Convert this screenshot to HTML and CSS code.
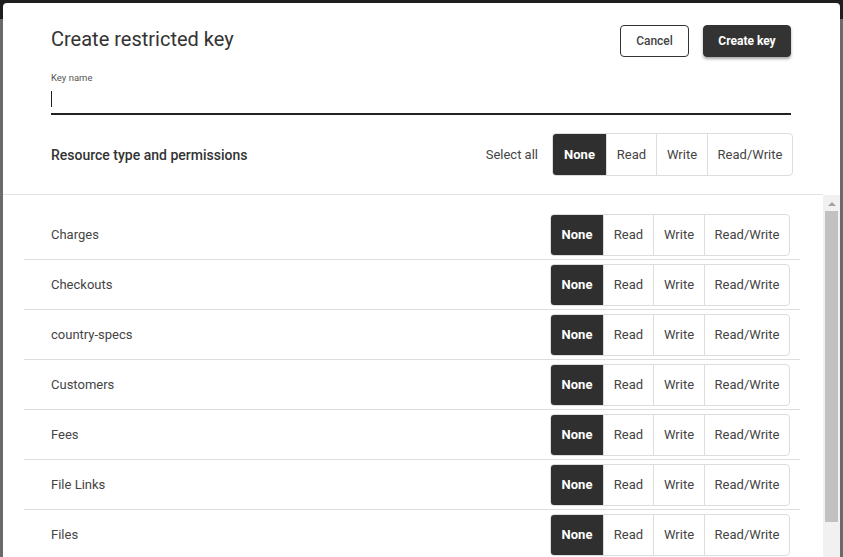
FILE: index.html
```html
<!DOCTYPE html>
<html>
<head>
<meta charset="utf-8">
<link rel="stylesheet" href="styles.css">
</head>
<body>
<div class="backdrop">
  <div class="backdrop-bar"></div>
</div>
<div class="modal">
  <div class="head">
    <h1 class="title">Create restricted key</h1>
    <div class="actions">
      <button class="btn btn-outline">Cancel</button>
      <button class="btn btn-primary">Create key</button>
    </div>
  </div>
  <div class="field">
    <label class="field-label">Key name</label>
    <div class="input"><span class="caret"></span></div>
  </div>
  <div class="perm-head">
    <div class="perm-title">Resource type and permissions</div>
    <div class="select-all">
      <span class="select-label">Select all</span>
      <div class="seg seg-lg">
        <span class="seg-item active">None</span>
        <span class="seg-item">Read</span>
        <span class="seg-item">Write</span>
        <span class="seg-item">Read/Write</span>
      </div>
    </div>
  </div>
  <div class="body">
    <div class="list">
      <div class="row"><span class="row-name">Charges</span><div class="seg"><span class="seg-item active">None</span><span class="seg-item">Read</span><span class="seg-item">Write</span><span class="seg-item">Read/Write</span></div></div>
      <div class="row"><span class="row-name">Checkouts</span><div class="seg"><span class="seg-item active">None</span><span class="seg-item">Read</span><span class="seg-item">Write</span><span class="seg-item">Read/Write</span></div></div>
      <div class="row"><span class="row-name">country-specs</span><div class="seg"><span class="seg-item active">None</span><span class="seg-item">Read</span><span class="seg-item">Write</span><span class="seg-item">Read/Write</span></div></div>
      <div class="row"><span class="row-name">Customers</span><div class="seg"><span class="seg-item active">None</span><span class="seg-item">Read</span><span class="seg-item">Write</span><span class="seg-item">Read/Write</span></div></div>
      <div class="row"><span class="row-name">Fees</span><div class="seg"><span class="seg-item active">None</span><span class="seg-item">Read</span><span class="seg-item">Write</span><span class="seg-item">Read/Write</span></div></div>
      <div class="row"><span class="row-name">File Links</span><div class="seg"><span class="seg-item active">None</span><span class="seg-item">Read</span><span class="seg-item">Write</span><span class="seg-item">Read/Write</span></div></div>
      <div class="row"><span class="row-name">Files</span><div class="seg"><span class="seg-item active">None</span><span class="seg-item">Read</span><span class="seg-item">Write</span><span class="seg-item">Read/Write</span></div></div>
    </div>
    <div class="scrollbar">
      <span class="scroll-up"></span>
      <span class="scroll-thumb"></span>
    </div>
  </div>
</div>
</body>
</html>
```
FILE: styles.css
```css
* { box-sizing: border-box; }
html, body {
  margin: 0;
  height: 557px;
  overflow: hidden;
}
body {
  background: #6a6a6a;
  font-family: Roboto, "Liberation Sans", sans-serif;
  color: #333;
}
.backdrop-bar {
  height: 19px;
  background: #1e1e1e;
}
.modal {
  position: absolute;
  left: 3px;
  top: 3px;
  width: 837px;
  height: 580px;
  background: #fff;
  border-radius: 4px 4px 0 0;
  display: flex;
  flex-direction: column;
}
.head {
  display: flex;
  justify-content: space-between;
  align-items: flex-start;
  padding: 22px 49px 0 48px;
}
.title {
  margin: 0;
  font-size: 20px;
  line-height: 28px;
  font-weight: 400;
  color: #333;
}
.actions {
  display: flex;
  gap: 14px;
}
.btn {
  height: 32px;
  font-family: Roboto, "Liberation Sans", sans-serif;
  font-size: 12px;
  border-radius: 4px;
  padding: 0 13px;
  cursor: pointer;
}
.btn-outline {
  background: #fff;
  border: 1px solid #333;
  color: #444;
  font-weight: 500;
  width: 69px;
}
.btn-primary {
  background: #333;
  border: 1px solid #333;
  color: #fff;
  font-weight: 700;
  width: 88px;
  box-shadow: 0 2px 3px rgba(0,0,0,0.35);
}
.field {
  padding: 0 49px 0 48px;
  margin-top: 14px;
}
.field-label {
  display: block;
  font-size: 9.5px;
  line-height: 14px;
  color: #555;
}
.input {
  height: 30px;
  border-bottom: 2px solid #222;
  display: flex;
  align-items: center;
  padding-top: 0;
}
.caret {
  width: 1px;
  height: 16px;
  background: #222;
}
.perm-head {
  display: flex;
  justify-content: space-between;
  align-items: center;
  padding: 18px 30px 18px 48px;
  border-bottom: 1px solid #e3e3e3;
  margin-right: 17px;
}
.perm-title {
  font-size: 14px;
  font-weight: 500;
  color: #333;
}
.select-all {
  display: flex;
  align-items: center;
  gap: 14px;
}
.select-label {
  font-size: 13px;
  color: #444;
}
.seg {
  display: flex;
  height: 42px;
  border: 1px solid #ddd;
  border-radius: 4px;
  overflow: hidden;
}
.seg-lg {
  height: 43px;
}
.seg-item {
  display: flex;
  align-items: center;
  justify-content: center;
  font-size: 13px;
  color: #444;
  border-left: 1px solid #ddd;
  padding: 0 11px;
}
.seg-item:first-child { border-left: none; }
.seg-item.active {
  background: #2f2f2f;
  color: #fff;
  font-weight: 700;
  width: 52px;
}
.seg-item:nth-child(2) { width: 50px; }
.seg-item:nth-child(3) { width: 51px; }
.seg-item:nth-child(4) { width: 85px; }
.seg-lg .seg-item.active { width: 53px; }
.body {
  flex: 1;
  display: flex;
  min-height: 0;
}
.list {
  flex: 1;
  padding: 15px 23px 0 21px;
}
.row {
  height: 50px;
  display: flex;
  align-items: center;
  justify-content: space-between;
  padding: 0 10px 0 27px;
  border-bottom: 1px solid #ddd;
}
.row-name {
  font-size: 13px;
  color: #444;
}
.scrollbar {
  width: 17px;
  background: #f1f1f1;
  display: flex;
  flex-direction: column;
  align-items: center;
  padding-top: 7px;
}
.scroll-up {
  width: 0;
  height: 0;
  border-left: 4px solid transparent;
  border-right: 4px solid transparent;
  border-bottom: 4px solid #a3a3a3;
}
.scroll-thumb {
  margin-top: 5px;
  width: 13px;
  height: 311px;
  background: #c1c1c1;
}
```
